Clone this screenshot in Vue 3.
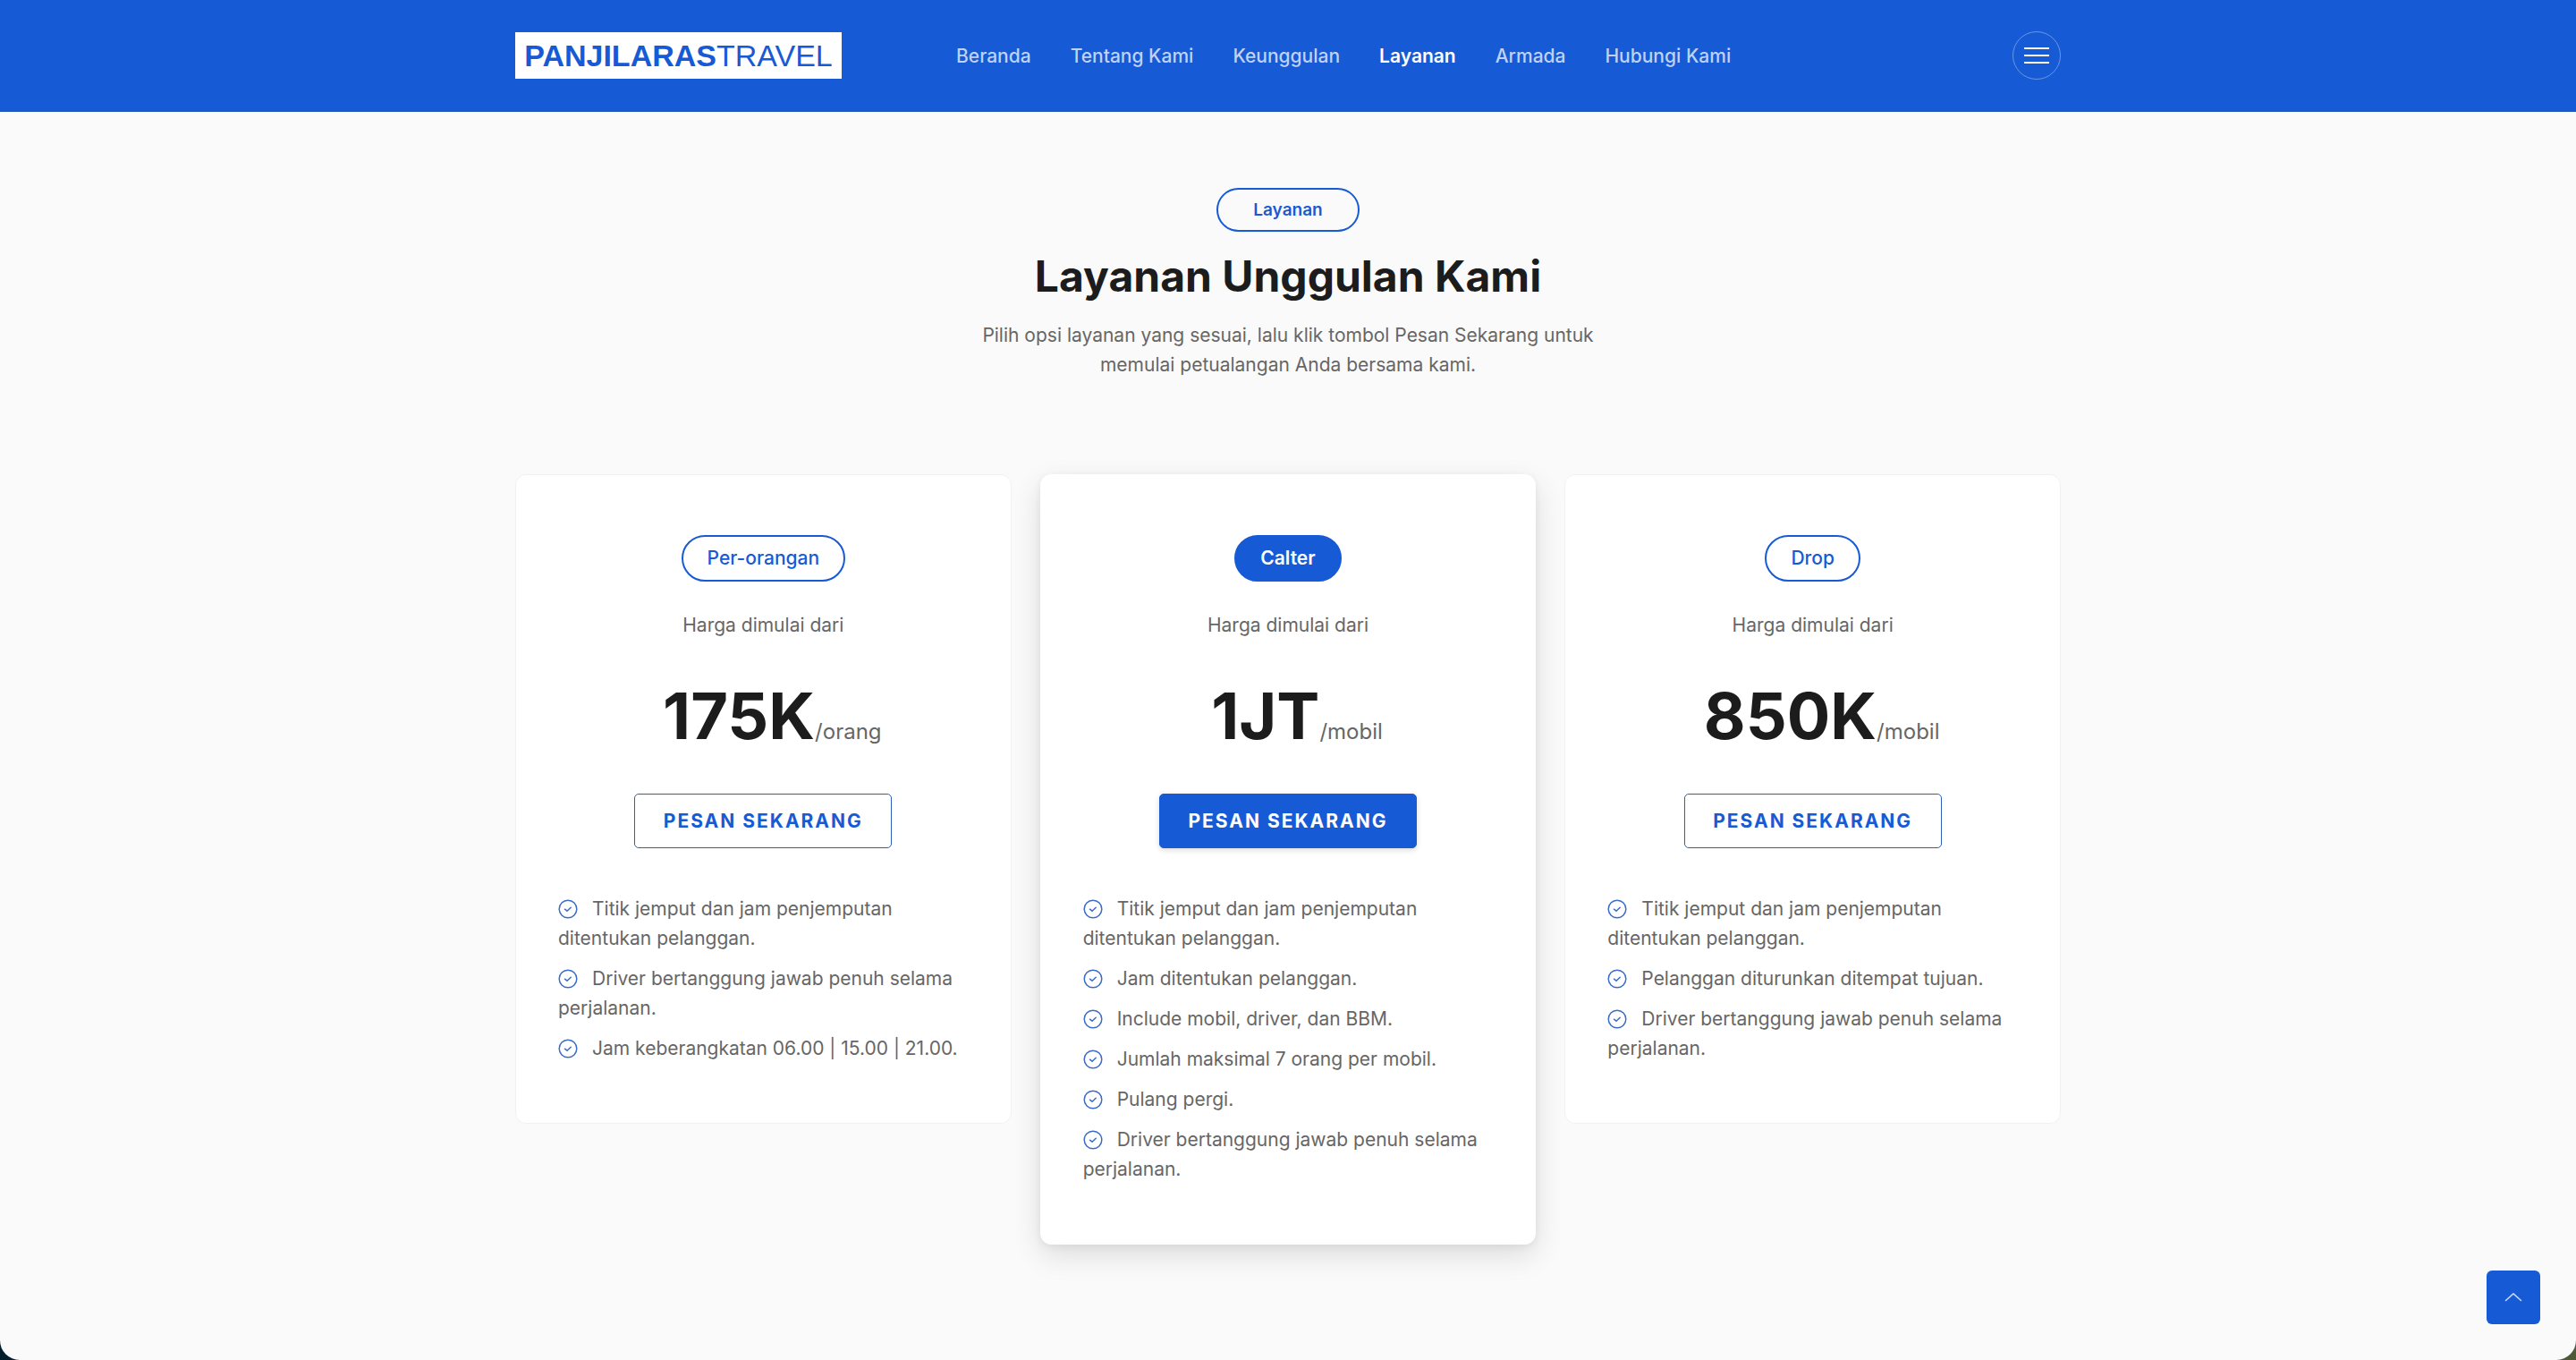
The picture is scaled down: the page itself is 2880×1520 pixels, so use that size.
<script setup>
const links = [
  { label: 'Beranda', href: '#beranda' },
  { label: 'Tentang Kami', href: '#tentang' },
  { label: 'Keunggulan', href: '#keunggulan' },
  { label: 'Layanan', href: '#layanan', active: true },
  { label: 'Armada', href: '#armada' },
  { label: 'Hubungi Kami', href: '#kontak' },
]

const plans = [
  {
    name: 'Per-orangan',
    price: '175K',
    unit: '/orang',
    features: [
      'Titik jemput dan jam penjemputan ditentukan pelanggan.',
      'Driver bertanggung jawab penuh selama perjalanan.',
      'Jam keberangkatan 06.00 | 15.00 | 21.00.',
    ],
  },
  {
    name: 'Calter',
    price: '1JT',
    unit: '/mobil',
    featured: true,
    features: [
      'Titik jemput dan jam penjemputan ditentukan pelanggan.',
      'Jam ditentukan pelanggan.',
      'Include mobil, driver, dan BBM.',
      'Jumlah maksimal 7 orang per mobil.',
      'Pulang pergi.',
      'Driver bertanggung jawab penuh selama perjalanan.',
    ],
  },
  {
    name: 'Drop',
    price: '850K',
    unit: '/mobil',
    features: [
      'Titik jemput dan jam penjemputan ditentukan pelanggan.',
      'Pelanggan diturunkan ditempat tujuan.',
      'Driver bertanggung jawab penuh selama perjalanan.',
    ],
  },
]
</script>

<template>
  <div class="page">
    <header class="header">
      <div class="container header-row">
        <a class="logo" href="#beranda"><b>PANJILARAS</b>TRAVEL</a>
        <nav class="nav">
          <a
            v-for="link in links"
            :key="link.href"
            :href="link.href"
            :class="{ active: link.active }"
          >{{ link.label }}</a>
        </nav>
        <button class="menu" type="button" aria-label="Menu">
          <svg width="30" height="20" viewBox="0 0 30 20" fill="none" stroke="currentColor" stroke-width="2">
            <path d="M1 2h28M1 10h28M1 18h28" />
          </svg>
        </button>
      </div>
    </header>

    <main id="layanan" class="container section">
      <div class="intro">
        <span class="kicker">Layanan</span>
        <h2>Layanan Unggulan Kami</h2>
        <p>Pilih opsi layanan yang sesuai, lalu klik tombol Pesan Sekarang untuk memulai petualangan Anda bersama kami.</p>
      </div>

      <div class="plans">
        <article
          v-for="plan in plans"
          :key="plan.name"
          class="card"
          :class="{ featured: plan.featured }"
        >
          <h3 class="tag">{{ plan.name }}</h3>
          <p class="from">Harga dimulai dari</p>
          <p class="price"><strong>{{ plan.price }}</strong><span>{{ plan.unit }}</span></p>
          <button class="order" type="button">PESAN SEKARANG</button>
          <ul class="features">
            <li v-for="feature in plan.features" :key="feature">
              <svg class="check" width="22" height="22" viewBox="0 0 22 22" fill="none" stroke="currentColor" stroke-width="1.5" stroke-linecap="round" stroke-linejoin="round" aria-hidden="true">
                <circle cx="11" cy="11" r="9.8" />
                <path d="M7.500 11.200l2.500 2 4.200-4" />
              </svg>{{ feature }}
            </li>
          </ul>
        </article>
      </div>
    </main>

    <button class="to-top" type="button" aria-label="Kembali ke atas">
      <svg width="20" height="12" viewBox="0 0 20 12" fill="none" stroke="currentColor" stroke-width="1.6" stroke-linecap="round" stroke-linejoin="round">
        <path d="M1.500 9.500L10 1.800l8.500 7.700" />
      </svg>
    </button>
  </div>
</template>

<style>
html {
  background: linear-gradient(90deg, #02202c, #4c5a38);
}
body {
  margin: 0;
}
</style>

<style scoped>
.page {
  --blue: #165bd5;
  min-height: 100vh;
  box-sizing: border-box;
  overflow: hidden;
  border-radius: 0 0 22px 22px;
  background: #fafafa;
  color: #666;
  font-family: Inter, "Liberation Sans", sans-serif;
  font-size: 21px;
  line-height: 33px;
}

.page *,
.page *::before {
  box-sizing: border-box;
}

.container {
  width: 60%;
  margin: 0 auto;
}

.header {
  background: var(--blue);
  border-bottom: 1px solid #1c53b4;
}

.header-row {
  display: flex;
  align-items: center;
  padding: 35px 0;
}

.logo {
  min-width: 365px;
  margin-right: 128px;
  background: #fff;
  color: var(--blue);
  font-family: "Liberation Sans", Arial, sans-serif;
  font-size: 34px;
  line-height: 52px;
  text-align: center;
  text-decoration: none;
}

.nav {
  display: flex;
  gap: 44px;
  font-weight: 500;
}

.nav a {
  color: #bfd2f5;
  text-decoration: none;
}

.nav a.active {
  color: #fff;
  font-weight: 600;
}

.menu {
  display: grid;
  place-items: center;
  width: 54px;
  height: 54px;
  margin-left: auto;
  padding: 0;
  border: 1px solid #6a96e6;
  border-radius: 50%;
  background: none;
  color: #fff;
}

.section {
  padding: 85px 0 100px;
}

.intro {
  display: flex;
  flex-direction: column;
  align-items: center;
  gap: 20px;
  margin-bottom: 106px;
  text-align: center;
}

.kicker {
  min-width: 160px;
  border: 2px solid var(--blue);
  border-radius: 25px;
  color: var(--blue);
  font-size: 19px;
  font-weight: 600;
  line-height: 45px;
}

.intro h2 {
  margin: 0;
  color: #1c1c1c;
  font-size: 48px;
  font-weight: 700;
  line-height: 59px;
}

.intro p {
  max-width: 740px;
  margin: 0;
}

.plans {
  display: grid;
  grid-template-columns: repeat(3, 1fr);
  align-items: start;
  gap: 32px;
}

.card {
  display: flex;
  flex-direction: column;
  align-items: center;
  padding: 67px 47px;
  border: 1px solid #f1f1f1;
  border-radius: 12px;
  background: #fff;
}

.card.featured {
  border-color: #fff;
  box-shadow: 0 12px 32px rgba(0, 0, 0, 0.12), 0 2px 8px rgba(0, 0, 0, 0.06);
}

.tag {
  margin: 0;
  padding: 0 27px;
  border: 2px solid var(--blue);
  border-radius: 26px;
  color: var(--blue);
  font-size: 21px;
  font-weight: 500;
  line-height: 48px;
}

.featured .tag {
  background: var(--blue);
  color: #fff;
  font-weight: 600;
}

.from {
  margin: 32px 0 40px;
}

.price {
  margin: 0 0 42px;
  padding-left: 20px;
  font-size: 72px;
  line-height: 90px;
  white-space: nowrap;
}

.price strong {
  color: #1c1c1c;
  font-weight: 700;
}

.price span {
  font-size: 24px;
  line-height: 33px;
}

.order {
  width: 288px;
  height: 61px;
  padding: 0;
  border: 1px solid #2a5fbe;
  border-radius: 5px;
  background: #fff;
  color: var(--blue);
  font: 700 21px Inter, "Liberation Sans", sans-serif;
  letter-spacing: 2px;
}

.featured .order {
  border-color: var(--blue);
  background: var(--blue);
  color: #fff;
  box-shadow: 0 2px 6px rgba(0, 0, 0, 0.15);
}

.features {
  display: flex;
  flex-direction: column;
  align-self: stretch;
  gap: 12px;
  margin: 51px 0 0;
  padding: 0;
  list-style: none;
}

.check {
  margin-right: 16px;
  color: #3c6cc8;
  vertical-align: -4px;
}

.to-top {
  position: fixed;
  right: 40px;
  bottom: 40px;
  display: grid;
  place-items: center;
  width: 60px;
  height: 60px;
  padding: 0;
  border: 0;
  border-radius: 6px;
  background: var(--blue);
  color: #c5d6f5;
}
</style>
